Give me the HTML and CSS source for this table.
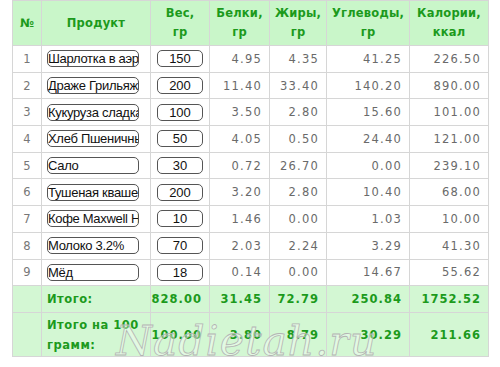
FILE: index.html
```html
<!DOCTYPE html>
<html lang="ru">
<head>
<meta charset="utf-8">
<title>Калорийность</title>
<link rel="stylesheet" href="styles.css">
</head>
<body>
<div class="wrap">
<table class="calc">
<colgroup>
<col class="c-num"><col class="c-prod"><col class="c-wt"><col class="c-b"><col class="c-f"><col class="c-u"><col class="c-k">
</colgroup>
<thead>
<tr><th>№</th><th>Продукт</th><th>Вес,<br>гр</th><th>Белки,<br>гр</th><th>Жиры,<br>гр</th><th>Углеводы,<br>гр</th><th>Калории,<br>ккал</th></tr>
</thead>
<tbody>
<tr><td class="n">1</td><td><input class="prod" type="text" value="Шарлотка в аэрогриле"></td><td class="w"><input class="wt" type="text" value="150"></td><td>4.95</td><td>4.35</td><td>41.25</td><td>226.50</td></tr>
<tr><td class="n">2</td><td><input class="prod" type="text" value="Драже Грильяж"></td><td class="w"><input class="wt" type="text" value="200"></td><td>11.40</td><td>33.40</td><td>140.20</td><td>890.00</td></tr>
<tr><td class="n">3</td><td><input class="prod" type="text" value="Кукуруза сладкая"></td><td class="w"><input class="wt" type="text" value="100"></td><td>3.50</td><td>2.80</td><td>15.60</td><td>101.00</td></tr>
<tr><td class="n">4</td><td><input class="prod" type="text" value="Хлеб Пшеничный"></td><td class="w"><input class="wt" type="text" value="50"></td><td>4.05</td><td>0.50</td><td>24.40</td><td>121.00</td></tr>
<tr><td class="n">5</td><td><input class="prod" type="text" value="Сало"></td><td class="w"><input class="wt" type="text" value="30"></td><td>0.72</td><td>26.70</td><td>0.00</td><td>239.10</td></tr>
<tr><td class="n">6</td><td><input class="prod" type="text" value="Тушеная квашеная капуста"></td><td class="w"><input class="wt" type="text" value="200"></td><td>3.20</td><td>2.80</td><td>10.40</td><td>68.00</td></tr>
<tr><td class="n">7</td><td><input class="prod" type="text" value="Кофе Maxwell House"></td><td class="w"><input class="wt" type="text" value="10"></td><td>1.46</td><td>0.00</td><td>1.03</td><td>10.00</td></tr>
<tr><td class="n">8</td><td><input class="prod" type="text" value="Молоко 3.2%"></td><td class="w"><input class="wt" type="text" value="70"></td><td>2.03</td><td>2.24</td><td>3.29</td><td>41.30</td></tr>
<tr><td class="n">9</td><td><input class="prod" type="text" value="Мёд"></td><td class="w"><input class="wt" type="text" value="18"></td><td>0.14</td><td>0.00</td><td>14.67</td><td>55.62</td></tr>
</tbody>
<tfoot>
<tr class="tot"><td></td><td class="lbl">Итого:</td><td>828.00</td><td>31.45</td><td>72.79</td><td>250.84</td><td>1752.52</td></tr>
<tr class="tot tot2"><td></td><td class="lbl">Итого на 100 грамм:</td><td>100.00</td><td>3.80</td><td>8.79</td><td>30.29</td><td>211.66</td></tr>
</tfoot>
</table>
<div class="mark">Nadietah.ru</div>
</div>
</body>
</html>
```
FILE: styles.css
```css
html, body {
  margin: 0;
  padding: 0;
  background: #fff;
}
.wrap {
  position: relative;
  padding: 0 0 0 12px;
}
.calc {
  border-collapse: collapse;
  table-layout: fixed;
  width: 476px;
  font-family: "DejaVu Sans", Verdana, sans-serif;
  font-size: 11px;
  border: 1px solid #d6d6d6;
}
.c-num { width: 29px; }
.c-prod { width: 109px; }
.c-wt { width: 59px; }
.c-b { width: 60px; }
.c-f { width: 57px; }
.c-u { width: 83px; }
.c-k { width: 79px; }

.calc th, .calc td {
  border: 1px solid #d6d6d6;
  padding: 0 7px 0 0;
}
.calc thead th {
  background: #c9f6c9;
  color: #1c9a1c;
  font-weight: bold;
  font-size: 11.5px;
  line-height: 19px;
  height: 44px;
  text-align: center;
  padding: 0;
  letter-spacing: 0.2px;
}
.calc tbody td {
  height: 25.7px;
  color: #6a6a6a;
  text-align: right;
  letter-spacing: 1.2px;
  font-size: 11.5px;
}
.calc tbody td.n {
  text-align: center;
  padding: 0;
  letter-spacing: 0;
  color: #777;
}
.calc tbody td:nth-child(2) {
  padding: 0 0 0 5px;
  text-align: left;
}
.calc tbody td.w {
  padding: 0;
  text-align: center;
}
input.prod, input.wt {
  box-sizing: border-box;
  height: 17px;
  border: 1px solid #555;
  border-radius: 5px;
  font-family: "Liberation Sans", Arial, sans-serif;
  font-size: 13px;
  color: #111;
  background: #fff;
  padding: 0;
  margin: 0;
  vertical-align: middle;
  letter-spacing: -0.3px;
}
input.prod { width: 92px; }
input.wt { width: 46px; text-align: center; letter-spacing: 0; }

.calc tfoot td {
  background: #d3f7d3;
  color: #1c9a1c;
  font-weight: bold;
  text-align: right;
  height: 26px;
  font-size: 11.5px;
  letter-spacing: 1px;
}
.calc tfoot td.lbl {
  text-align: left;
  padding-left: 5px;
  letter-spacing: 0.5px;
  line-height: 20px;
}
.calc tfoot .tot2 td {
  height: 43px;
}
.mark {
  position: absolute;
  left: 116px;
  top: 318px;
  font-family: "DejaVu Serif", serif;
  font-style: italic;
  font-size: 41px;
  line-height: 46px;
  color: rgba(255,255,255,0.35);
  -webkit-text-stroke: 0.8px #b4b4b4;
  letter-spacing: 1px;
  pointer-events: none;
}
```
